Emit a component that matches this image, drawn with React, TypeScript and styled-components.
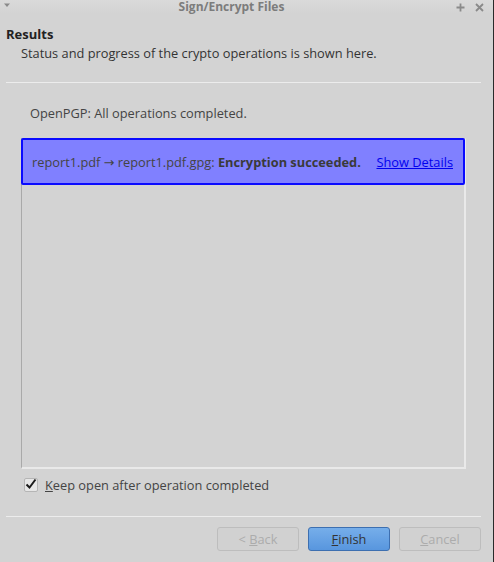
import React from "react";
import styled, { createGlobalStyle } from "styled-components";

const Global = createGlobalStyle`
  html, body { margin: 0; padding: 0; background: #d3d3d3; }
  body { font-family: "Open Sans", "DejaVu Sans", sans-serif; }
`;

const Window = styled.div`
  width: 494px;
  height: 562px;
  box-sizing: border-box;
  background: #d3d3d3;
  border-right: 1px solid #2a2a2a;
  display: flex;
  flex-direction: column;
  overflow: hidden;
  color: #3a3a3a;
`;

const TitleBar = styled.div`
  height: 14px;
  display: grid;
  grid-template-columns: 40px 1fr 60px;
  align-items: center;
  background: linear-gradient(#dadada, #d3d3d3);
  font-size: 12px;
  font-weight: 700;
  color: #7c7c7c;
`;

const TitleText = styled.div`
  text-align: center;
  line-height: 14px;
  margin-left: -10px;
  white-space: nowrap;
`;

const TitleButtons = styled.div`
  display: flex;
  justify-content: flex-end;
  gap: 10px;
  padding-right: 9px;
`;

const Header = styled.div`
  padding: 12px 6px 0 6px;
`;

const HeaderTitle = styled.div`
  font-size: 13px;
  font-weight: 700;
  color: #222;
  line-height: 16px;
`;

const HeaderSub = styled.div`
  font-size: 12.8px;
  color: #333;
  padding-left: 15px;
  margin-top: 3px;
  line-height: 17px;
`;

const Separator = styled.div<{ $top: number }>`
  height: 1px;
  background: #ececec;
  margin: ${(p) => p.$top}px 12px 0 6px;
`;

const Body = styled.div`
  padding: 0 27px 0 21px;
  display: flex;
  flex-direction: column;
`;

const Status = styled.div`
  font-size: 12.8px;
  color: #444;
  padding-left: 9px;
  margin-top: 22px;
  line-height: 17px;
`;

const ListBox = styled.div`
  margin-top: 16px;
  height: 331px;
  box-sizing: border-box;
  border-left: 1px solid #a9a9a9;
  border-top: 1px solid #c4c4c4;
  border-right: 2px solid #e9e9e9;
  border-bottom: 2px solid #e9e9e9;
  background: #d3d3d3;
`;

const Item = styled.div`
  height: 47px;
  box-sizing: border-box;
  background: #8080ff;
  border: 2px solid #0a0aff;
  border-radius: 2px;
  margin: -1px -1px 0 -1px;
  display: flex;
  align-items: center;
  padding: 0 10px 0 9px;
  font-size: 12.8px;
  color: #444;
  white-space: nowrap;
`;

const Bold = styled.span`
  font-weight: 700;
  color: #3a3a3a;
`;

const Link = styled.a`
  margin-left: auto;
  color: #0000ee;
  text-decoration: underline;
`;

const CheckRow = styled.label`
  display: flex;
  align-items: center;
  gap: 7px;
  margin-top: 7px;
  padding-left: 3px;
  font-size: 12.8px;
  color: #444;
`;

const Box = styled.span`
  width: 12px;
  height: 12px;
  border: 1px solid #b5b5b5;
  border-radius: 2px;
  background: #e6e6e6;
  position: relative;
  display: inline-block;
`;

const Buttons = styled.div`
  display: flex;
  justify-content: flex-end;
  gap: 9px;
  padding: 10px 12px 0 0;
`;

const Button = styled.button<{ $primary?: boolean }>`
  width: 82px;
  height: 24px;
  box-sizing: border-box;
  border-radius: 3px;
  font-family: "Open Sans", sans-serif;
  font-size: 12.8px;
  padding: 0;
  border: 1px solid ${(p) => (p.$primary ? "#3d6fb0" : "#bdbdbd")};
  background: ${(p) =>
    p.$primary ? "linear-gradient(#76aeea, #5896de)" : "#d1d1d1"};
  color: ${(p) => (p.$primary ? "#333" : "#acacac")};
`;

export default function App() {
  return (
    <>
      <Global />
      <Window>
        <TitleBar>
          <svg width="40" height="14" viewBox="0 0 40 14">
            <path d="M4 3.5 L10 3.5 L7 7 Z" fill="#8a8a8a" />
          </svg>
          <TitleText>Sign/Encrypt Files</TitleText>
          <TitleButtons>
            <svg width="9" height="9" viewBox="0 0 9 9">
              <path d="M4.5 0.5 V8.5 M0.5 4.5 H8.5" stroke="#8a8a8a" strokeWidth="1.8" />
            </svg>
            <svg width="9" height="9" viewBox="0 0 9 9">
              <path d="M1 1 L8 8 M8 1 L1 8" stroke="#8a8a8a" strokeWidth="1.8" />
            </svg>
          </TitleButtons>
        </TitleBar>
        <Header>
          <HeaderTitle>Results</HeaderTitle>
          <HeaderSub>Status and progress of the crypto operations is shown here.</HeaderSub>
        </Header>
        <Separator $top={20} />
        <Body>
          <Status>OpenPGP: All operations completed.</Status>
          <ListBox>
            <Item>
              <span>
                report1.pdf → report1.pdf.gpg: <Bold>Encryption succeeded.</Bold>
              </span>
              <Link>Show Details</Link>
            </Item>
          </ListBox>
          <CheckRow>
            <Box>
              <svg width="14" height="14" viewBox="0 0 14 14" style={{ position: "absolute", left: -1, top: -2 }}>
                <path d="M2.5 7.5 L5.5 10.5 L11.5 2.5" stroke="#1a1a1a" strokeWidth="2" fill="none" />
              </svg>
            </Box>
            <span>
              <u>K</u>eep open after operation completed
            </span>
          </CheckRow>
        </Body>
        <Separator $top={22} />
        <Buttons>
          <Button disabled>
            &lt; <u>B</u>ack
          </Button>
          <Button $primary>
            <u>F</u>inish
          </Button>
          <Button disabled>
            <u>C</u>ancel
          </Button>
        </Buttons>
      </Window>
    </>
  );
}
